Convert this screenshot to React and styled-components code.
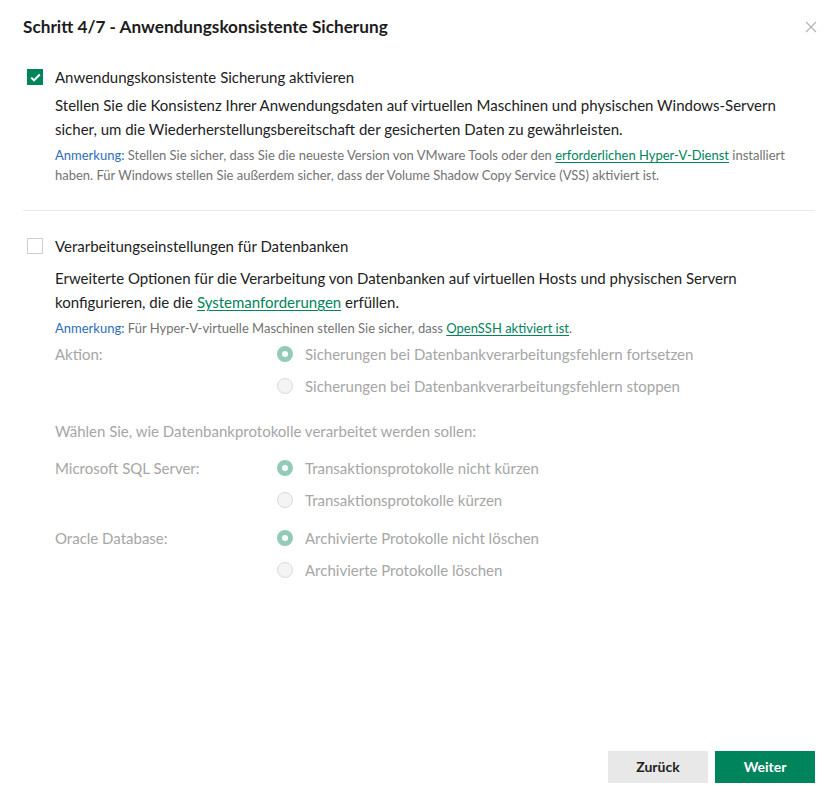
import React from 'react'
import styled, { createGlobalStyle } from 'styled-components'

const GREEN = '#00845c'

const GlobalStyle = createGlobalStyle`
  html, body {
    margin: 0;
    padding: 0;
    background: #fff;
  }
  body {
    font-family: Lato, "Open Sans", "Liberation Sans", sans-serif;
    color: #222;
  }
`

const Dialog = styled.div`
  height: 100vh;
  box-sizing: border-box;
  display: flex;
  flex-direction: column;
  padding: 16px 20px 14px 23px;
`

const Header = styled.div`
  display: flex;
  align-items: center;
  justify-content: space-between;
  margin-bottom: 28px;
`

const Title = styled.h2`
  margin: 0;
  font-size: 17.2px;
  line-height: 22px;
  font-weight: 700;
  color: #1c1c1c;
`

const Close = styled.button`
  border: 0;
  background: none;
  padding: 0;
  margin-right: -4px;
  width: 16px;
  height: 16px;
  display: flex;
  align-items: center;
  justify-content: center;
  cursor: pointer;
`

const Section = styled.div`
  padding-left: 4px;
`

const CheckRow = styled.label`
  display: flex;
  align-items: center;
  gap: 12px;
  font-size: 15px;
  line-height: 22px;
  color: #222;
`

const Box = styled.span`
  width: 16px;
  height: 16px;
  box-sizing: border-box;
  display: flex;
  align-items: center;
  justify-content: center;
  background: ${p => (p.$checked ? GREEN : '#fff')};
  border: 1px solid ${p => (p.$checked ? GREEN : '#cfcfcf')};
`

const Body = styled.div`
  padding-left: 28px;
`

const Desc = styled.p`
  margin: ${p => p.$top}px 0 0;
  font-size: 15px;
  line-height: 24px;
  color: #222;
`

const Note = styled.p`
  margin: 4px 0 0;
  font-size: 13px;
  line-height: 20px;
  color: #737373;
`

const NoteLabel = styled.span`
  color: #2a6ebb;
`

const Link = styled.a`
  color: ${GREEN};
  text-decoration: underline;
  text-underline-offset: 2px;
`

const Divider = styled.hr`
  border: 0;
  border-top: 1px solid #e8e8e8;
  margin: 25px 0 24px;
`

const Options = styled.div`
  display: flex;
  flex-direction: column;
  gap: 6px;
  color: #a6a6a6;
  font-size: 15px;
`

const OptionGroup = styled.div`
  display: grid;
  grid-template-columns: 222px 1fr;
`

const GroupLabel = styled.div`
  line-height: 32px;
`

const RadioList = styled.div`
  display: flex;
  flex-direction: column;
`

const RadioRow = styled.label`
  display: flex;
  align-items: center;
  gap: 12px;
  height: 32px;
`

const Radio = styled.span`
  width: 16px;
  height: 16px;
  box-sizing: border-box;
  border-radius: 50%;
  flex: none;
  background: ${p => (p.$checked ? '#fff' : '#f4f4f4')};
  border: ${p => (p.$checked ? '5px solid #92cbb7' : '1px solid #dadada')};
`

const Prompt = styled.div`
  line-height: 22px;
  margin: 12px 0 4px;
`

const Footer = styled.div`
  margin-top: auto;
  display: flex;
  justify-content: flex-end;
  gap: 7px;
`

const Button = styled.button`
  width: 100px;
  height: 32px;
  padding: 0 0 2px;
  border: 0;
  font-family: inherit;
  font-size: 14px;
  font-weight: 700;
  cursor: pointer;
  background: ${p => (p.$primary ? GREEN : '#e8e8e8')};
  color: ${p => (p.$primary ? '#fff' : '#222')};
`

const Check = () => (
  <svg width="11" height="9" viewBox="0 0 11 9">
    <path d="M1.2 4.6 L4 7.3 L9.8 1.5" fill="none" stroke="#fff" strokeWidth="2" />
  </svg>
)

const RadioGroup = ({ label, options, selected }) => (
  <OptionGroup>
    <GroupLabel>{label}</GroupLabel>
    <RadioList>
      {options.map((o, i) => (
        <RadioRow key={o}>
          <Radio $checked={i === selected} />
          {o}
        </RadioRow>
      ))}
    </RadioList>
  </OptionGroup>
)

export default function App() {
  return (
    <>
      <GlobalStyle />
      <Dialog>
        <Header>
          <Title>Schritt 4/7 - Anwendungskonsistente Sicherung</Title>
          <Close aria-label="Schließen">
            <svg width="12" height="12" viewBox="0 0 12 12">
              <path d="M1 1 L11 11 M11 1 L1 11" stroke="#b3b3b3" strokeWidth="1.2" />
            </svg>
          </Close>
        </Header>

        <Section>
          <CheckRow>
            <Box $checked>
              <Check />
            </Box>
            Anwendungskonsistente Sicherung aktivieren
          </CheckRow>
          <Body>
            <Desc $top={5}>
              Stellen Sie die Konsistenz Ihrer Anwendungsdaten auf virtuellen Maschinen und physischen Windows-Servern
              sicher, um die Wiederherstellungsbereitschaft der gesicherten Daten zu gewährleisten.
            </Desc>
            <Note>
              <NoteLabel>Anmerkung:</NoteLabel> Stellen Sie sicher, dass Sie die neueste Version von VMware Tools oder
              den <Link href="#">erforderlichen Hyper-V-Dienst</Link> installiert haben. Für Windows stellen Sie
              außerdem sicher, dass der Volume Shadow Copy Service (VSS) aktiviert ist.
            </Note>
          </Body>
        </Section>

        <Divider />

        <Section>
          <CheckRow>
            <Box />
            Verarbeitungseinstellungen für Datenbanken
          </CheckRow>
          <Body>
            <Desc $top={9}>
              Erweiterte Optionen für die Verarbeitung von Datenbanken auf virtuellen Hosts und physischen Servern
              konfigurieren, die die <Link href="#">Systemanforderungen</Link> erfüllen.
            </Desc>
            <Note>
              <NoteLabel>Anmerkung:</NoteLabel> Für Hyper-V-virtuelle Maschinen stellen Sie sicher, dass{' '}
              <Link href="#">OpenSSH aktiviert ist</Link>.
            </Note>
            <Options>
              <RadioGroup
                label="Aktion:"
                selected={0}
                options={[
                  'Sicherungen bei Datenbankverarbeitungsfehlern fortsetzen',
                  'Sicherungen bei Datenbankverarbeitungsfehlern stoppen',
                ]}
              />
              <Prompt>Wählen Sie, wie Datenbankprotokolle verarbeitet werden sollen:</Prompt>
              <RadioGroup
                label="Microsoft SQL Server:"
                selected={0}
                options={['Transaktionsprotokolle nicht kürzen', 'Transaktionsprotokolle kürzen']}
              />
              <RadioGroup
                label="Oracle Database:"
                selected={0}
                options={['Archivierte Protokolle nicht löschen', 'Archivierte Protokolle löschen']}
              />
            </Options>
          </Body>
        </Section>

        <Footer>
          <Button>Zurück</Button>
          <Button $primary>Weiter</Button>
        </Footer>
      </Dialog>
    </>
  )
}
